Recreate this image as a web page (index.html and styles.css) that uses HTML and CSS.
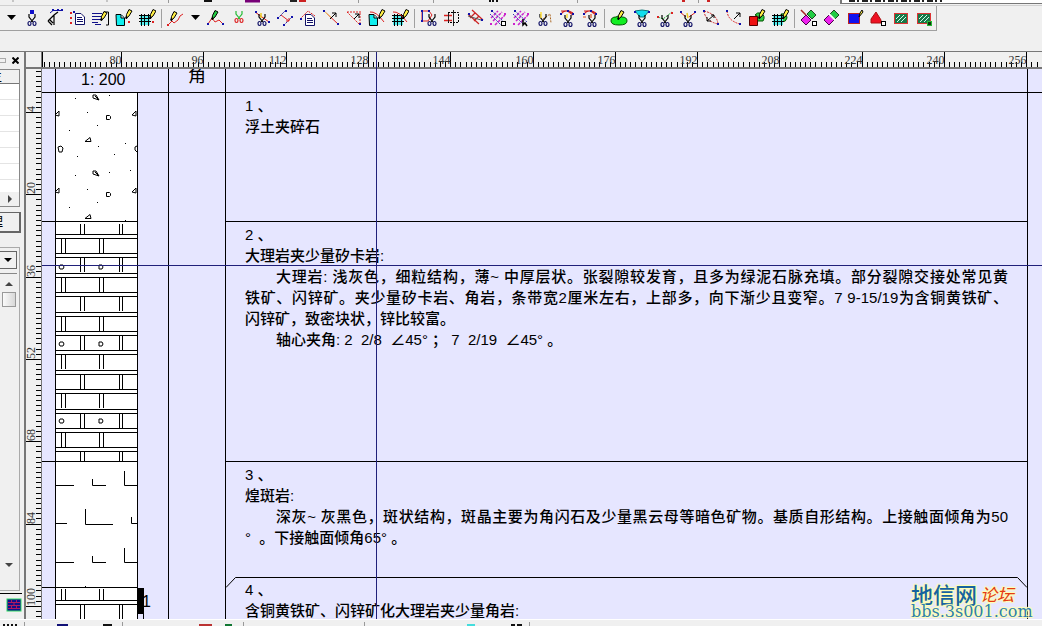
FILE: index.html
```html
<!DOCTYPE html>
<html lang="zh-CN">
<head>
<meta charset="utf-8">
<title>钻孔柱状图</title>
<link rel="stylesheet" href="styles.css">
</head>
<body>
<div class="app">
  <div class="strip strip-top">
    <svg width="840" height="5" aria-hidden="true"><path d="M13 0v2M107 0v2M168.500 0v3M358.500 0v3M433.500 0v3M577.500 0v3M698.500 0v3" stroke="#999"/><path d="M204 1h8M490 0v2M493 0v2M497 0v2" stroke="#111" stroke-width="2"/><path d="M245 1h15" stroke="#707" stroke-width="3"/><path d="M290 1h7" stroke="#222" stroke-width="2"/><path d="M299 1h7M682 1h3M707 1h3" stroke="#c22" stroke-width="2"/></svg>
    <div class="field-edge"></div>
  </div>
  <div class="toolbar" role="toolbar" aria-label="编辑工具"></div>
  <main class="work">
    <aside class="panel">
      <div class="panel-title"><i class="grip"></i><button class="close" aria-label="关闭"><svg width="7" height="7"><path d="M0.500 0.500l6 6M6.500 0.500l-6 6" stroke="#000" stroke-width="2"/></svg></button></div>
      <div class="list">
        <div class="list-head"><span>主</span></div>
        <div class="list-rows"></div>
        <div class="list-scroll"><svg width="5" height="8"><path d="M0 0l4 4l-4 4z" fill="#444"/></svg></div>
      </div>
      <button class="manage"><span>理</span></button>
      <div class="tree">
        <button class="drop" aria-label="展开"><svg width="8" height="5"><path d="M0 0h8l-4 4z"/></svg></button>
        <div class="vscroll">
          <svg width="8" height="5"><path d="M0 5h8l-4 -4z" fill="#444"/></svg>
          <i class="thumb"></i>
          <svg class="down" width="8" height="5"><path d="M0 0h8l-4 4z" fill="#444"/></svg>
        </div>
      </div>
      <div class="swatch"><svg width="16" height="14"><rect x="1" y="1" width="14" height="12" fill="#10108c" stroke="#2bd860"/><path d="M2 4.500h12M2 7.500h12M2 10.500h12M5.500 2v3M10.500 2v3M8 5v3M5.500 8v3M10.500 8v3" stroke="#b01860"/></svg></div>
    </aside>
    <div class="corner"></div>
    <div class="ruler-h"><svg id="rh" width="2400" height="15"></svg></div>
    <div class="ruler-v"><svg id="rv" width="16" height="1600"></svg></div>
    <section class="canvas">
      <div class="log">
        <div class="scale">1: 200</div>
        <div class="angle"><span>角</span></div>
        <div class="head-rest"></div>
        <div class="litho">
          <svg width="126" height="527" aria-label="岩性柱">
            <rect x="13" width="83" height="527" fill="#fff"/>
            <g id="rocks" fill="none" stroke="#000"></g>
            <rect x="96" y="495" width="6" height="26"/>
            <path d="M101.500 520v7" stroke="#000"/>
            <text class="mark" x="100" y="514">1</text>
          </svg>
        </div>
        <div class="blank"></div>
        <div class="desc">
          <article class="layer l1"><p>1 、</p><p>浮土夹碎石</p></article>
          <article class="layer l2"><p>2 、</p><p>大理岩夹少量矽卡岩:</p>
            <p class="indent full">大理岩: 浅灰色，细粒结构，薄~ 中厚层状。张裂隙较发育，且多为绿泥石脉充填。部分裂隙交接处常见黄</p>
            <p class="full">铁矿、闪锌矿。夹少量矽卡岩、角岩，条带宽2厘米左右，上部多，向下渐少且变窄。7 9-15/19为含铜黄铁矿、</p>
            <p>闪锌矿，致密块状，锌比较富。</p>
            <p class="indent">轴心夹角: 2&nbsp; 2/8&nbsp; ∠45° ；&nbsp;7&nbsp; 2/19&nbsp; ∠45° 。</p></article>
          <article class="layer l3"><p>3 、</p><p>煌斑岩:</p>
            <p class="indent full">深灰~ 灰黑色，斑状结构，斑晶主要为角闪石及少量黑云母等暗色矿物。基质自形结构。上接触面倾角为50</p>
            <p>°&nbsp; 。下接触面倾角65° 。</p></article>
          <article class="layer l4">
            <div class="bevel"><svg width="10" height="11"><path d="M0 10.500L9.500 0.500H10" fill="none" stroke="#000"/></svg><i></i><svg width="10" height="11"><path d="M0 0.500H0.500L10 10.500" fill="none" stroke="#000"/></svg></div>
            <p>4 、</p><p>含铜黄铁矿、闪锌矿化大理岩夹少量角岩:</p></article>
        </div>
      </div>
      <div class="cross-h"></div>
      <div class="watermark"><div class="site"><b>地信网</b><em>论坛</em></div><span>bbs.3s001.com</span></div>
    </section>
    <div class="cross-v"></div>
  </main>
  <div class="strip strip-bottom">
    <svg width="700" height="6" aria-hidden="true"><path d="M3 5h14" stroke="#111" stroke-width="2" stroke-dasharray="2 2"/><path d="M24.500 2v4M122.500 2v4M243.500 2v4M364.500 2v4M529.500 2v4" stroke="#999"/><path d="M57 5h11" stroke="#117" stroke-width="2"/><path d="M103 5h9M511 5h4M517 5h5" stroke="#111" stroke-width="2"/><path d="M199 5h13" stroke="#b33" stroke-width="2"/><path d="M225 5h7" stroke="#173" stroke-width="2"/><path d="M467 5h8" stroke="#4dd" stroke-width="2"/></svg>
  </div>
</div>
<script src="app.js"></script>
</body>
</html>
```
FILE: styles.css
```css
* { box-sizing: border-box; }
body { margin: 0; background: #f0f0f0; font-family: "Liberation Sans", "Noto Sans CJK SC", sans-serif; color: #000; }
button { margin: 0; padding: 0; border: 0; background: none; font: inherit; }
svg { display: block; }
p { margin: 0; }

.app { height: 100vh; display: flex; flex-direction: column; overflow: hidden; }
.strip { flex: none; display: flex; overflow: hidden; }
.strip-top { height: 6px; border-bottom: 1px solid #d0d0d0; }
.field-edge { flex: 1; height: 4px; background: #fff; border: 1px solid #777; border-width: 0 0 1px 2px; background-image: repeating-linear-gradient(90deg, transparent 0 3px, #222 3px 9px, transparent 9px 11px, #222 11px 13px); background-size: 96px 2px; background-repeat: no-repeat; background-position: 4px 0; }
.strip-bottom { height: 7px; border-top: 1px solid #fff; }

.toolbar { flex: none; align-self: flex-start; display: flex; align-items: center; height: 25px; padding: 0 1px 0 3px; border: 1px solid #a0a0a0; border-width: 0 1px 1px 0; }
.tool { width: 23px; height: 22px; display: flex; align-items: center; justify-content: center; flex: none; }
.arrow { width: 17px; height: 22px; display: flex; align-items: center; justify-content: center; flex: none; }
.sep { width: 6px; height: 19px; background: linear-gradient(#a0a0a0, #a0a0a0) 3px 0 / 1px 100% no-repeat; flex: none; }

.work { position: relative; flex: 1; min-height: 0; margin-top: 20px; display: grid; grid-template: 17px 1fr / 24px 18px 1fr; border-top: 1px solid #777; }
.panel { grid-row: 1 / 3; display: flex; flex-direction: column; overflow: hidden; }
.panel-title { height: 17px; display: flex; align-items: center; justify-content: space-between; padding-right: 5px; flex: none; }
.grip { width: 6px; height: 5px; border: 1px solid #aaa; border-left: 0; }
.list { flex: none; width: 20px; border: 1px solid #888; border-width: 1px 1px 1px 0; }
.list-head { height: 14px; overflow: hidden; font-size: 12px; line-height: 14px; border-bottom: 1px solid #777; }
.list-head span { margin-left: -10px; }
.list-rows { height: 108px; background: repeating-linear-gradient(#fff 0 15px, #e4e4e4 15px 16px); }
.list-scroll { height: 14px; display: flex; align-items: center; padding-left: 8px; }
.manage { flex: none; width: 21px; height: 21px; margin: 5px 0 14px; overflow: hidden; border: 1px solid #666; border-width: 1px 2px 2px 0; text-align: left; font-size: 13px; line-height: 18px; }
.manage span { margin-left: -10px; }
.tree { flex: 1; width: 20px; border: 1px solid #aaa; border-width: 1px 1px 1px 0; margin-bottom: 2px; display: flex; flex-direction: column; }
.drop { width: 17px; height: 18px; margin: 3px 0 4px; border: 1px solid #666; border-left: 0; display: flex; align-items: center; justify-content: center; flex: none; }
.vscroll { flex: 1; width: 17px; border-top: 1px solid #888; display: flex; flex-direction: column; align-items: center; padding: 7px 0 22px; }
.thumb { width: 14px; height: 15px; margin-top: 6px; border: 1px solid #999; background: linear-gradient(90deg, #fafafa, #d8d8d8); }
.down { margin-top: auto; }
.swatch { flex: none; height: 26px; width: 22px; padding: 4px 0 0 6px; border-top: 1px solid #000; }

.corner { border-left: 2px solid #777; border-right: 1px solid #777; border-bottom: 2px solid #777; }
.ruler-h { overflow: hidden; border-bottom: 2px solid #777; }
.ruler-v { overflow: hidden; border-left: 2px solid #777; border-right: 1px solid #777; }
.ruler-h text, .ruler-v text { font: 12px "Liberation Serif", serif; fill: #333; }

.canvas { position: relative; overflow: hidden; background: #e6e6ff; }
.log { height: 100%; display: grid; grid-template: 23px 1fr / 13px 113px 58px 1fr 14px; }
.scale { grid-column: 2; border: 1px solid #000; border-width: 0 0 0 1px; font-size: 16px; line-height: 22px; padding-left: 25px; }
.angle { border: 1px solid #000; border-width: 0 1px; overflow: hidden; text-align: center; font-size: 18px; line-height: 18px; }
.angle span { display: block; margin-top: -2px; }
.head-rest { border-right: 1px solid #000; }
.litho { grid-column: 1 / 3; grid-row: 2; border-top: 1px solid #000; overflow: hidden; }
.blank { border: 1px solid #000; grid-row: 2; border-bottom: 0; }
.desc { grid-column: 4 / 6; grid-row: 2; border-top: 1px solid #000; display: flex; flex-direction: column; position: relative; overflow: hidden; }
.layer { flex: none; margin-right: 14px; padding: 2px 19px 0; border-right: 1px solid #000; border-bottom: 1px solid #000; font-size: 15px; line-height: 21px; font-weight: 500; white-space: nowrap; }
.l1 { min-height: 129px; }
.l2 { min-height: 240px; }
.l3 { min-height: 115px; border-bottom: 0; }
.l4 { flex: 1; padding-top: 0; border-bottom: 0; }
.indent { padding-left: 31px; }
.full { white-space: normal; height: 21px; text-align: justify; text-align-last: justify; }
.bevel { display: flex; height: 2px; margin: 0 -19px; }
.bevel svg { flex: none; overflow: visible; }
.bevel i { flex: 1; height: 1px; background: #000; }
.mark { font-size: 16px; }

.cross-h { position: absolute; left: 0; right: 0; top: 196px; height: 1px; background: #20207a; }
.cross-v { position: absolute; left: 376px; top: 0; bottom: 0; width: 1px; background: #20207a; }
.watermark { position: absolute; right: 7px; bottom: 0; width: 124px; text-shadow: 1px 1px 1px #ffffb4, -1px -1px 1px #ffffb4, 1px -1px 1px #ffffb4, -1px 1px 1px #ffffb4; }
.site { display: flex; align-items: center; gap: 3px; height: 18px; line-height: 18px; }
.watermark b { font-size: 22px; font-weight: 500; color: #1663a0; }
.watermark em { font-size: 17px; color: #e43a14; }
.watermark span { display: block; font: 16px/14px "DejaVu Serif", serif; color: #2f7fae; }
```
FILE: app.js
```js
const svgIcon = (body) => `<svg width="18" height="18" viewBox="0 0 18 18" fill="none" stroke-width="1">${body}</svg>`;
const P = (d, s, f = "none", extra = "") => `<path d="${d}" stroke="${s}" fill="${f}" ${extra}/>`;
const dot = (x, y, c = "#11a", n = 2) => `<rect x="${x}" y="${y}" width="${n}" height="${n}" fill="${c}"/>`;
const dash = 'stroke-dasharray="2 1"';

const scissors = (x, y, blade = "#000", grip = "#116") =>
  `<g transform="translate(${x} ${y})">` +
  P("M2 0V3L6 8M8 0V3L4 8", blade, "none", 'stroke-width="1.200"') +
  `<ellipse cx="2.500" cy="9.500" rx="1.500" ry="2" stroke="${grip}" stroke-width="1.200"/><ellipse cx="7.500" cy="9.500" rx="1.500" ry="2" stroke="${grip}" stroke-width="1.200"/></g>`;
const pencil = (x, y, c = "#fe4") =>
  `<g transform="translate(${x} ${y})">` + P("M4 0.500L7 2L4 7L1 9.500L1.500 5.500z", "#000", c) + P("M1 9.500l1-2", "#000", "none", 'stroke-width="2"') + "</g>";
const doc = (x, y) =>
  `<g transform="translate(${x} ${y})">` + P("M0.500 0.500H6L9.500 4V11.500H0.500z", "#116", "#fff") + P("M2 4.500h5M2 6.500h6M2 8.500h6", "#116") + "</g>";
const page = P("M1 5.500H6L9.500 9V16.500H1.500z", "#000", "#1ee") + P("M6 6V9H9", "#000", "#fff");
const grid = '<rect x="2" y="6" width="10" height="10" fill="#5ee"/>' + P("M1 6.500H13M1 9.500H13M1 12.500H13M3.500 5V17M6.500 5V17M10.500 5V17", "#000");
const box = '<rect x="12.500" y="12.500" width="4" height="4" fill="#fff" stroke="#000"/>';
const lattice = P("M2 9L9 2M4 12L13 3M6 16L16 6", "#c2c", "none", 'stroke-dasharray="3 1" stroke-width="1.500"') + P("M3 2L15 13M1 5L12 16", "#33b", "none", dash) + dot(2, 1) + dot(15, 4, "#c2c") + dot(1, 14, "#c2c");
const hatch = '<rect x="2.500" y="4.500" width="13" height="10" fill="#187848" stroke="#d33"/>' + P("M4 10L8 6M5 13L12 6M9 13L14 8", "#cfe");
const diamonds = P("M1 11L6 6L11 11L6 16z", "#404", "#e2e") + P("M7 5L11 1L16 6L12 10z", "#242", "#2c4");
const topArc = P("M3 5Q7 0 11 3L15 6M3 2H7M11 2L15 4", "#c22", "none", 'stroke-width="1.200"') + dot(2, 4) + dot(14, 4) + dot(9, 1);

const groups = [
  [
    dot(7, 1, "#11c", 4) + scissors(4, 5),
    P("M4 4L7 1.500H17", "#119") + dot(6, 0) + dot(11, 0) + dot(15, 0) + P("M12 3L8 6L2 12M8 6V16M2 12L6 16M4 11L7 14", "#000", "none", 'stroke-width="1.200"'),
    dot(1, 3, "#d22") + dot(1, 8, "#d22") + dot(1, 13, "#d22") + dot(4, 2) + doc(6, 4),
    P("M0 4.500H10M0 7.500H10M0 10.500H9M0 13.500H6M3 15.500H9", "#118", "none", 'stroke-width="1.200"') + P("M12 3H16.500V16H14", "#000") + pencil(8, 2),
    page + pencil(10, 0) + dot(13, 12, "#d22"),
    grid + pencil(11, 0) + dot(14, 12, "#d22")
  ],
  [P("M1 16L5 12L7 14L11 11L13 7L16 5", "#d22") + dot(0, 15, "#d22") + pencil(3, 2), "arrow",
    P("M1 15L5 9L8 13L12 11L16 15", "#d22") + dot(0, 14) + dot(15, 14) + pencil(4, 1, "#2c4"),
    scissors(4, 2, "#2b3", "#d22"),
    P("M2 3L16 13", "#d22") + dot(2, 2) + dot(15, 12) + scissors(4, 5) + P("M8 4V9", "#ec2", "none", 'stroke-width="1.500"'),
    P("M2 9L9 2M8 16L16 8", "#119", "none", dash) + P("M5 6L13 12M10 12H13V9", "#d22") + dot(1, 8) + dot(9, 1) + dot(7, 15) + dot(15, 7),
    P("M1 10L9 2L16 7", "#d22", "none", dash) + dot(1, 9) + doc(6, 5),
    P("M2 2L16 15", "#d22") + P("M3 3L10 9", "#ec6") + dot(1, 1) + dot(15, 14) + P("M8 10L14 4M10 4H14V8", "#000"),
    P("M2 3H16M2 3L14 15M15 4V14", "#d22", "none", dash) + P("M9 10L14 5M10 5H14V9", "#000") + dot(14, 14),
    page + P("M2 3Q8 2 16 13", "#d22") + pencil(10, 0),
    grid + P("M2 3Q8 2 16 13", "#d22") + pencil(11, 0)],
  [P("M2 2H9L12 6L8 12H2z", "#d22") + P("M2.500 3V11", "#22a") + dot(1, 1) + dot(1, 11) + dot(8, 1) + scissors(7, 5),
    P("M1 6.500H9M1 11.500H9", "#d22", "none", 'stroke-width="1.500"') + P("M5.500 3V14M10.500 1V17", "#222") + P("M5 3.500H15.500V13.500H5", "#000", "none", dash),
    P("M2 5L13 15M6 1L17 11M4 9L9 4M8 12L13 7", "#c22", "none", 'stroke-width="1.200"') + P("M2 7L15 11", "#555") + dot(2, 4) + dot(15, 10),
    lattice + box,
    lattice + P("M11 10V16L13 14L15 17", "#000", "none", 'stroke-width="1.500"'),
    P("M8 10L15 5L16 14", "#a62", "none", dash) + scissors(3, 5) + P("M6 3V9", "#fd3", "none", 'stroke-width="1.500"'),
    topArc + scissors(5, 6) + P("M9 5V9", "#fd3", "none", 'stroke-width="1.500"'),
    topArc + scissors(6, 6) + P("M10 5V9M2 8h3", "#d52", "none", 'stroke-width="1.200"')],
  [P("M1 12Q1 8 6 8Q9 5 12 8Q17 8 17 12Q17 16 9 16Q1 16 1 12z", "#050", "#1e2") + pencil(7, 1),
    P("M2 2Q9 0 16 2L11 8H7z", "#177", "#1de") + dot(1, 2) + dot(15, 2) + scissors(4, 6),
    P("M2 8L7 10L16 3", "#2a3", "none", dash) + dot(1, 7, "#d22") + dot(15, 3, "#d22") + scissors(4, 6),
    P("M1 3L7 8M17 3L10 8", "#d22") + dot(1, 2) + dot(15, 2) + P("M8 4L9 9", "#ec2", "none", 'stroke-width="1.500"') + scissors(4, 6),
    P("M2 2Q3 12 16 15Q15 5 2 2", "#c22", "none", dash) + dot(1, 1) + dot(15, 14) + P("M5 12L12 6M5 8V12H9M9 6H12V9", "#000"),
    P("M2 2Q3 12 15 15", "#d22", "none", dash) + dot(1, 1) + dot(14, 14) + P("M9 10L15 4M11 4H15V8", "#000"),
    P("M7 6Q9 3 13 4Q18 7 15 12H9V7z", "#050", "#3c4") + P("M1.500 7.500H9.500V16.500H1.500z", "#500", "#e11") + pencil(10, 0),
    P("M10 5Q16 4 16 9Q15 13 11 13z", "#050", "#3c4") + grid + pencil(11, 0)],
  [diamonds + P("M1 1L6 6", "#a22", "none", 'stroke-width="1.500"') + box,
    diamonds + P("M6 5L12 11", "#fff", "none", 'stroke-width="2"'),
    '<rect x="2.500" y="4.500" width="11" height="10" fill="#11e" stroke="#b22"/>' + P("M13 8L14 4L16 1L17 3z", "#000", "#fe4"),
    P("M2 14V10L7 3L12 11V14z", "#a11", "#e12") + box,
    hatch,
    hatch + '<rect x="12.500" y="12.500" width="4" height="4" fill="#131" stroke="#2b3"/>']
];

const arrow = '<button class="arrow" aria-label="更多"><svg width="9" height="6"><path d="M0 0H9L4.500 5z"/></svg></button>';
document.querySelector(".toolbar").innerHTML = arrow + groups.map((g) =>
  g.map((b) => b === "arrow" ? arrow : `<button class="tool" aria-label="工具">${svgIcon(b)}</button>`).join("")
).join('<span class="sep"></span>');

const UNIT = 82.3 / 16;
let h = "", v = "";
for (let n = -15; n < 450; n++) {
  const x = Math.round(79 + n * UNIT) + 0.5;
  const major = n % 16 === 0;
  h += `<path d="M${x} ${major ? 0 : 10}V15" stroke="#000"/>`;
  if (major) h += `<text x="${x}" y="12" text-anchor="end">${80 + n}</text>`;
}
h += '<path d="M0.500 0V15" stroke="#000"/>';
for (let n = -8; n < 280; n++) {
  const y = Math.round(43 + n * UNIT) + 0.5;
  const major = n % 16 === 0;
  v += `<path d="M${major ? 0 : 10} ${y}H16" stroke="#000"/>`;
  if (major) v += `<text transform="translate(9 ${y - 0.5}) rotate(-90)">${4 + n}</text>`;
}
document.getElementById("rh").innerHTML = h;
document.getElementById("rv").innerHTML = v;

/* Lithology column: breccia, marble with skarn, lamprophyre, marble */
let r = "M13.500 0V527M95.500 0V527M0 128.500H96M0 368.500H96M0 494.500H96";
for (const [x, y] of [[33, 5], [67, 2], [45, 19], [55, 32], [27, 37], [83, 50], [56, 53], [72, 61], [35, 63], [88, 77], [33, 82], [67, 79], [45, 96], [55, 109], [27, 114], [83, 127]]) r += `M${x} ${y}.500h1`;
for (const [x, y] of [[51, 2], [51, 78]]) r += `M${x} ${y}l3 0l3 5l-3 -1l-3 -1zM${x + 2} ${y + 1}l4 4`;
for (const [x, y] of [[43, 48], [43, 125]]) r += `M${x} ${y}.500h6l-1 -4z`;
for (const [x, y] of [[90, 22], [90, 99]]) r += `M${x} ${y}l4 -4v5zM${x - 77} ${y}l4 -4v5z`;
for (const [x, y] of [[64, 22], [64, 99]]) r += `M${x}.500 ${y}.500h3l1 1v2l-1 1h-3z`;
r += "M16 54l3 -1l2 2l-1 4h-3zM95 53l-2 1v3l2 2";

const brick = (y, height, even) => {
  let d = "";
  for (const x of even ? [38, 42, 77, 80] : [19, 23, 57, 61]) d += `M${x}.500 ${y}v${height}`;
  return d;
};
r += brick(131, 10, true);
for (let i = 0; i < 12; i++) {
  const y = Math.round(141 + i * 19.4);
  r += `M13 ${y}.500H96` + (y + 4 < 368 ? `M13 ${y + 4}.500H96` : "");
  r += brick(y + 4, Math.min(15, 368 - y - 4), i % 2 === 1);
}
for (const y of [174, 251, 328]) r += `M18 ${y - 2}h3l1 2l-1 2h-3l-1 -2zM57 ${y - 2}h3l1 2l-1 2h-3z`;

for (const y of [392, 469]) r += `M13 ${y}.500H32M50.500 ${y - 6}V${y}.500H64M82.500 ${y - 14}V${y}.500H96`;
r += "M13 430.500H25M43.500 416V431.500H71M89.500 424V430.500H96M43 493.500h1";
r += brick(496, 11, false) + "M13 507.500H96M13 511.500H96" + brick(512, 15, true);
document.getElementById("rocks").innerHTML = `<path d="${r}"/>`;
```
